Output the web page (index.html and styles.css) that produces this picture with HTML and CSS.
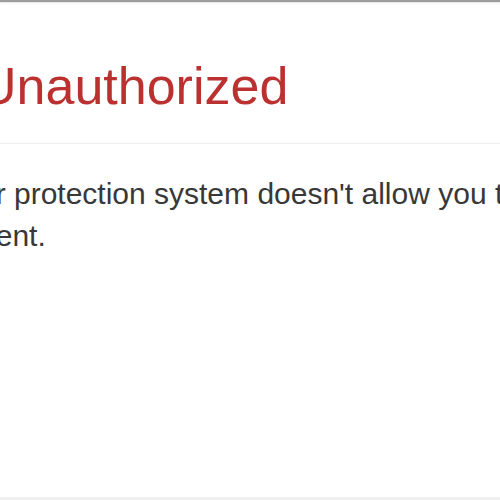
FILE: index.html
```html
<!DOCTYPE html>
<html lang="en">
<head>
<meta charset="utf-8">
<title>Unauthorized</title>
<link rel="stylesheet" href="styles.css">
</head>
<body>
<div class="page">
  <div class="topbar"></div>
  <div class="page-header">
    <h1 class="title">Unauthorized</h1>
  </div>
  <p class="message">Your protection system doesn't allow you to access this content.</p>
  <div class="footer"></div>
</div>
</body>
</html>
```

FILE: styles.css
```css
html, body {
  margin: 0;
  padding: 0;
  background: #ffffff;
  overflow: hidden;
}

body {
  font-family: "Liberation Sans", Arial, sans-serif;
  color: #383838;
}

.page {
  display: flex;
  flex-direction: column;
  height: 500px;
  overflow: hidden;
}

.topbar {
  height: 2px;
  flex: none;
  background: #9c9c9c;
  box-shadow: 0 1px 2px rgba(0, 0, 0, 0.12);
}

.page-header {
  flex: none;
  padding: 56px 0 28px 0;
  border-bottom: 1px solid #eeeeee;
}

.title {
  margin: 0 0 0 -21px;
  font-size: 52px;
  line-height: 57px;
  font-weight: 400;
  color: #bb3130;
  white-space: nowrap;
}

.message {
  flex: none;
  margin: 29px 0 0 -61px;
  text-indent: 6px;
  width: 800px;
  font-size: 30px;
  line-height: 41.5px;
  color: #383838;
}

.footer {
  margin-top: auto;
  flex: none;
  height: 3px;
  background: #eeeeee;
}
```
